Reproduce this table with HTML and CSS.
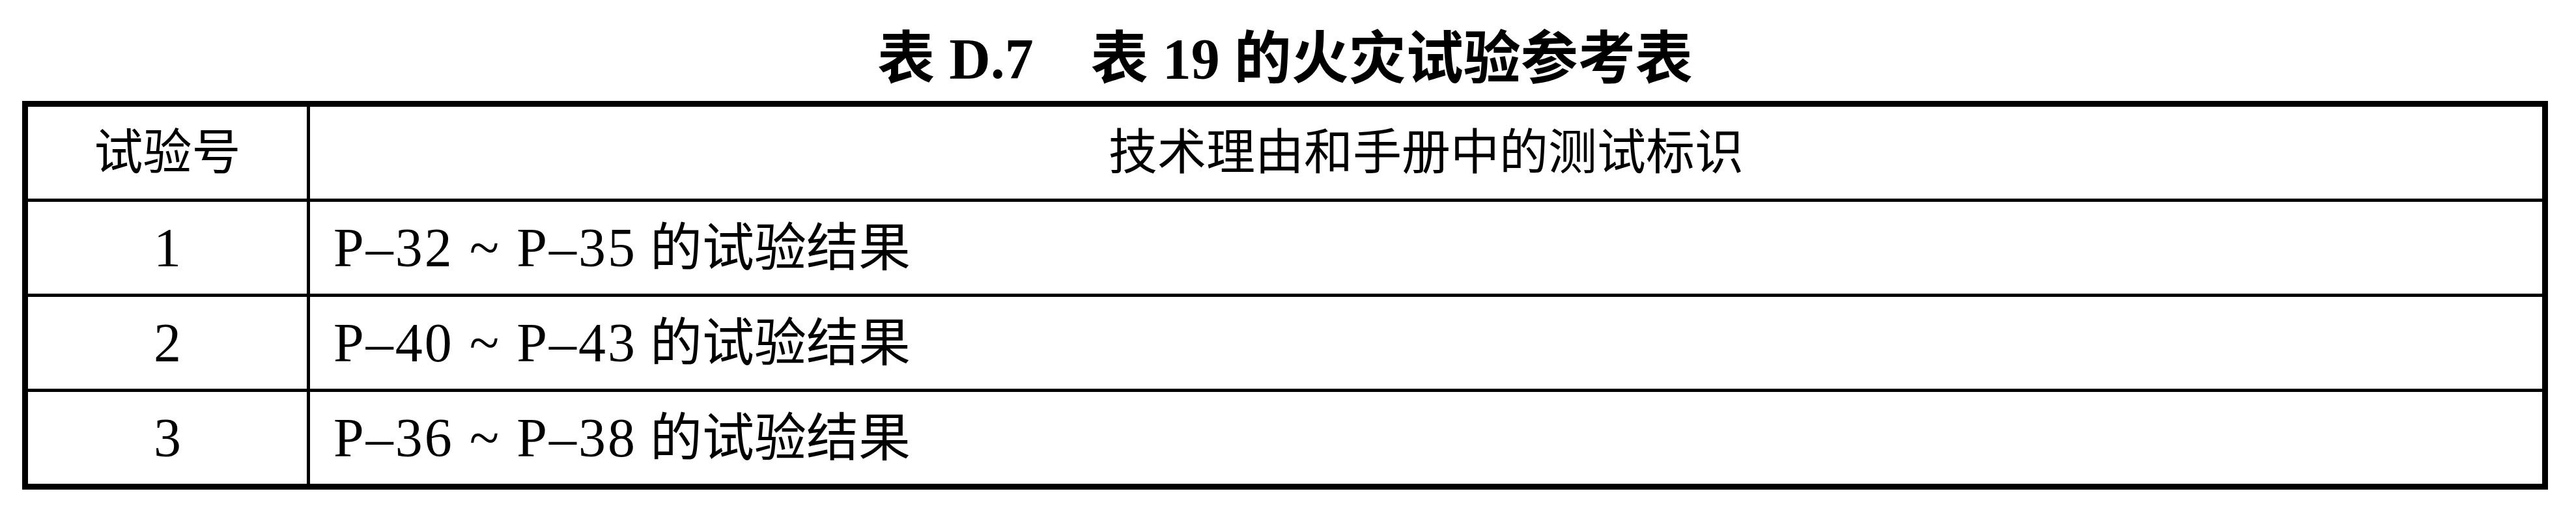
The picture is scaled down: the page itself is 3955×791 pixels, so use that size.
FILE: index.html
```html
<!DOCTYPE html>
<html lang="zh-CN">
<head>
<meta charset="utf-8">
<title>表 D.7 表 19 的火灾试验参考表</title>
<link rel="stylesheet" href="styles.css">
</head>
<body>
<div class="page">
  <h1 class="title">表 D.7　表 19 的火灾试验参考表</h1>
  <div class="table">
    <div class="cell c1">试验号</div>
    <div class="cell c2 center">技术理由和手册中的测试标识</div>

    <div class="cell c1"><span class="n">1</span></div>
    <div class="cell c2 row"><span class="n">P–32 ~ P–35</span> 的试验结果</div>

    <div class="cell c1"><span class="n">2</span></div>
    <div class="cell c2 row"><span class="n">P–40 ~ P–43</span> 的试验结果</div>

    <div class="cell c1 last"><span class="n">3</span></div>
    <div class="cell c2 row last"><span class="n">P–36 ~ P–38</span> 的试验结果</div>
  </div>
</div>
</body>
</html>
```

FILE: styles.css
```css
html, body {
  margin: 0;
  padding: 0;
  background: #ffffff;
  color: #000000;
}

.page {
  width: 3955px;
  padding-top: 47px;
}

.title {
  margin: 0 0 21px 34px;
  width: 3878px;
  height: 87px;
  line-height: 87px;
  text-align: center;
  font-family: "Liberation Serif", "Noto Sans CJK SC", serif;
  font-weight: bold;
  font-size: 88px;
  white-space: pre;
}

.table {
  margin-left: 34px;
  width: 3878px;
  box-sizing: border-box;
  border: 9px solid #000;
  display: grid;
  grid-template-columns: 433px 1fr;
  font-family: "Liberation Serif", "Noto Sans CJK SC", serif;
  font-size: 75px;
  line-height: 1;
}

.cell {
  height: 146px;
  box-sizing: border-box;
  border-bottom: 5px solid #000;
  display: flex;
  align-items: center;
  white-space: nowrap;
}

.cell.last {
  height: 141px;
  border-bottom: none;
}

.c1 {
  border-right: 5px solid #000;
  justify-content: center;
}

.c2 {
  padding-left: 36px;
}

.c2.row {
  font-size: 80px;
}

.c2.center {
  padding-left: 0;
  justify-content: center;
}

.n {
  font-size: 84px;
  letter-spacing: 3px;
  margin-right: 20px;
}

.c1 .n {
  letter-spacing: 0;
  margin-right: 0;
}
```
